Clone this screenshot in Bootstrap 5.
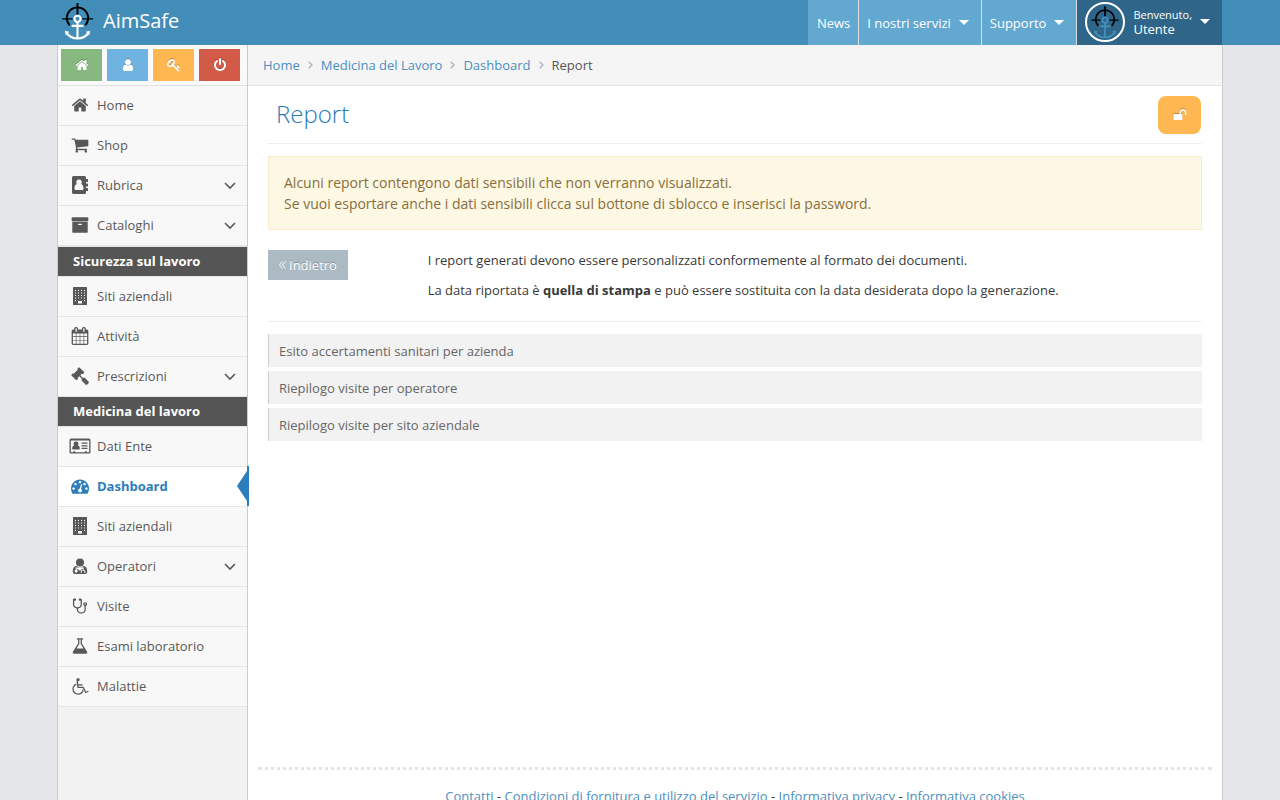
<!DOCTYPE html>
<html lang="it">
<head>
<meta charset="utf-8">
<meta name="viewport" content="width=device-width, initial-scale=1">
<title>Report - AimSafe</title>
<link rel="stylesheet" href="https://cdn.jsdelivr.net/npm/bootstrap@5.3.0/dist/css/bootstrap.min.css">
<style>
  body { font-family: "Open Sans", sans-serif; font-size: 13px; line-height: 20px; color: #393939; background: #e4e6e9; }
  a { text-decoration: none; color: #4c8fbd; }
  a:hover { text-decoration: underline; }
  svg { fill: currentColor; flex: none; }
  .shell { width: 100%; max-width: 1166px; margin: 0 auto; }

  /* top bar */
  .topbar { background: #438eb9; }
  .topbar .shell { min-height: 45px; padding: 0 1px; }
  .topbar a { color: #fff; }
  .topbar a:hover { text-decoration: none; }
  .brand-link { padding: 0 0 3px 3px; gap: 9px; }
  .brand-name { font-size: 20px; }
  .top-link { background: #62a8d1; padding: 0 8px; gap: 8px; border-left: 1px solid #ddd; }
  li:first-child > .top-link { border-left-color: #62a8d1; }
  .top-link.user-link { background: #2e6589; padding-bottom: 2px; }
  .user-link small { font-size: 11px; line-height: 15px; }
  .user-link .user-name { line-height: 15px; }
  .avatar { width: 40px; height: 40px; border: 2px solid #fff; border-radius: 50%; color: #438eb9; }
  .tri { width: 10px; height: 5px; }

  /* sidebar */
  .frame { min-height: 100vh; border: solid #ccc; border-width: 0 1px; background: #fff; }
  .sidebar { width: 190px; flex: none; background: #f2f2f2; border-right: 1px solid #ccc; }
  .shortcuts { height: 41px; padding: 0 3px; background: #fafafa; border-bottom: 1px solid #e0e0e0; gap: 5px; }
  .shortcuts .btn { width: 41px; height: 32px; padding: 0; border: 0; border-radius: 0; color: #fff; }
  .shortcuts svg, .lock-btn svg { width: 14px; height: 14px; filter: drop-shadow(0 -1px 0 rgba(0,0,0,.25)); }
  .bg-go { background: #87b87f !important; }
  .bg-me { background: #6fb3e0 !important; }
  .bg-key { background: #ffb752 !important; }
  .bg-off { background: #d15b47 !important; }
  .side-list:first-of-type { border-bottom: 1px solid #e5e5e5; }
  .side-title { height: 30px; padding: 0 15px; line-height: 29px; font-size: 13px; font-weight: 700; color: #fff; background: #555; border-bottom: 1px solid #e5e5e5; }
  .side-link { height: 40px; padding: 0 11px 2px 7px; color: #585858; background: #f8f8f8; border-bottom: 1px solid #e5e5e5; }
  .side-link .ico { width: 32px; padding-right: 2px; display: flex; justify-content: center; }
  .side-link .ico svg { width: 18px; height: 18px; }
  .side-link .ico svg.wide { width: 22px; }
  .side-link .arr { width: 12px; height: 12px; margin-left: auto; }
  .side-link.active { position: relative; background: #fff; color: #2b7dbc; font-weight: 700; }
  .side-link.active::before { content: ""; position: absolute; right: 0; top: 4px; border: solid transparent; border-width: 15px 10px 15px 0; border-right-color: #2b7dbc; }
  .side-link.active::after { content: ""; position: absolute; right: -2px; top: -1px; bottom: 0; width: 2px; background: #2b7dbc; }

  /* content */
  .crumbs { min-height: 41px; padding: 0 15px; background: #f5f5f5; border-bottom: 1px solid #e5e5e5; }
  .crumbs .breadcrumb { --bs-breadcrumb-item-padding-x: 0; gap: 8px; }
  .crumbs .breadcrumb-item { display: flex; align-items: center; gap: 8px; }
  .crumbs .breadcrumb-item::before { display: none; }
  .crumbs .active { color: #555; }
  .crumbs svg { width: 5px; height: 8px; color: #b2b6bf; }
  .page-body { padding: 10px 20px 24px; }
  .page-head { padding: 0 1px 9px 8px; margin-bottom: 12px; border-bottom: 1px dotted #e2e2e2; }
  .page-head h1 { padding-bottom: 2px; font-size: 24px; line-height: 30px; font-weight: 300; color: #2679b5; }
  .lock-btn { width: 43px; height: 38px; padding: 0; border: 0; border-radius: 8px; color: #fff; }
  .notice { padding: 15px; margin-bottom: 20px; font-size: 14px; line-height: 21px; color: #8a6d3b; background: #fcf8e3; border: 1px solid #faebcc; border-radius: 0; }
  .back-btn { height: 30px; padding: 0 11px; border: 0; border-radius: 0; font-size: 13px; line-height: 30px; color: #fff; background: #abbac3; text-shadow: 0 -1px 0 rgba(0,0,0,.25); gap: 3px; }
  .back-btn svg { width: 7px; height: 8px; }
  .info p { margin: 0 0 10px; }
  .dots { margin: 11px 0 12px; border: 0; border-top: 1px dotted #e2e2e2; opacity: 1; }
  .reports { gap: 4px; }
  .reports a { display: block; padding: 7px 10px 6px; color: #666; background: #f2f2f2; border-left: 1px solid #ccc; }
  .foot { margin: auto 10px 0; height: 78px; padding-top: 16px; border-top: 3px dotted #e5e5e5; }
</style>
</head>
<body>
<svg class="d-none" aria-hidden="true">
  <symbol id="i-home" viewBox="0 0 1792 1792"><path d="M1472 992v480q0 26-19 45t-45 19h-384v-384h-256v384h-384q-26 0-45-19t-19-45v-480q0-1 .5-3t.5-3l575-474 575 474q1 2 1 6zm223-69l-62 74q-8 9-21 11h-3q-13 0-21-7l-692-577-692 577q-12 8-24 7-13-2-21-11l-62-74q-8-10-7-23.5t11-21.5l719-599q32-26 76-26t76 26l244 204v-195q0-14 9-23t23-9h192q14 0 23 9t9 23v408l219 182q10 8 11 21.5t-7 23.5z"/></symbol>
  <symbol id="i-user" viewBox="0 0 1792 1792"><path d="M1536 1399q0 109-62.5 187t-150.5 78h-854q-88 0-150.5-78t-62.5-187q0-85 8.500-160.500t31.500-152 58.500-131 94-89 134.500-34.500q131 128 313 128t313-128q76 0 134.500 34.500t94 89 58.500 131 31.500 152 8.500 160.500zm-256-887q0 159-112.500 271.500t-271.500 112.500-271.500-112.500-112.500-271.500 112.500-271.500 271.500-112.500 271.500 112.500 112.500 271.500z"/></symbol>
  <symbol id="i-key" viewBox="0 0 1792 1792"><path d="M832 512q0-80-56-136t-136-56-136 56-56 136q0 42 19 83-41-19-83-19-80 0-136 56t-56 136 56 136 136 56 136-56 56-136q0-42-19-83 41 19 83 19 80 0 136-56t56-136zm851 704q0 17-49 66t-66 49q-9 0-28.500-16t-36.500-33-38.500-40-24.500-26l-96 96 220 220q28 28 28 68 0 42-39 81t-81 39q-40 0-68-28l-671-671q-176 131-365 131-163 0-265.500-102.500t-102.500-265.500q0-160 95-313t248-248 313-95q163 0 265.500 102.500t102.500 265.500q0 189-131 365l355 355 96-96q-3-3-26-24.500t-40-38.500-33-36.500-16-28.500q0-17 49-66t66-49q13 0 23 10 6 6 46 44.500t82 79.500 86.500 86 73 78 28.500 41z"/></symbol>
  <symbol id="i-off" viewBox="0 0 1792 1792"><path d="M1664 896q0 156-61 298t-164 245-245 164-298 61-298-61-245-164-164-245-61-298q0-182 80.500-343t226.500-270q43-32 95.500-25t83.500 50q32 42 24.500 94.500t-49.500 84.500q-98 74-151.500 181t-53.500 228q0 104 40.500 198.500t109.500 163.500 163.500 109.500 198.500 40.500 198.500-40.500 163.500-109.500 109.500-163.500 40.500-198.500q0-121-53.500-228t-151.500-181q-42-32-49.500-84.500t24.500-94.500q31-43 84-50t95 25q146 109 226.500 270t80.500 343zm-640-768v640q0 52-38 90t-90 38-90-38-38-90v-640q0-52 38-90t90-38 90 38 38 90z"/></symbol>
  <symbol id="i-cart" viewBox="0 0 1792 1792"><path d="M704 1536q0 52-38 90t-90 38-90-38-38-90 38-90 90-38 90 38 38 90zm896 0q0 52-38 90t-90 38-90-38-38-90 38-90 90-38 90 38 38 90zm128-1088v512q0 24-16.500 42.500t-40.500 21.500l-1044 122q13 60 13 70 0 16-24 64h920q26 0 45 19t19 45-19 45-45 19h-1024q-26 0-45-19t-19-45q0-11 8-31.500t16-36 21.500-40 15.500-29.500l-177-823h-204q-26 0-45-19t-19-45 19-45 45-19h256q16 0 28.500 6.500t19.500 15.500 13 24.500 8 26 5.500 29.500 4.500 26h1201q26 0 45 19t19 45z"/></symbol>
  <symbol id="i-book" viewBox="0 0 18 18"><path fill-rule="evenodd" d="M2.500 0h11q1.500 0 1.500 1.500V3h1.500q.5 0 .5.500v2q0 .5-.5.500H15v1.500h1.500q.5 0 .5.500v2q0 .5-.5.500H15V12h1.500q.5 0 .5.500v2q0 .5-.5.500H15v1.500q0 1.500-1.500 1.500h-11Q1 18 1 16.500v-15Q1 0 2.500 0zM8 3.500a2.700 2.700 0 0 0-2.200 4.400C4 8.400 3.500 10.500 3.500 12.500q0 1.500 1.300 1.500h6.400q1.300 0 1.300-1.500c0-2-.5-4.100-2.300-4.600A2.700 2.700 0 0 0 8 3.500z"/></symbol>
  <symbol id="i-box" viewBox="0 0 1792 1792"><path d="M1088 832q0-26-19-45t-45-19h-256q-26 0-45 19t-19 45 19 45 45 19h256q26 0 45-19t19-45zm576-192v960q0 26-19 45t-45 19h-1408q-26 0-45-19t-19-45v-960q0-26 19-45t45-19h1408q26 0 45 19t19 45zm64-448v256q0 26-19 45t-45 19h-1536q-26 0-45-19t-19-45v-256q0-26 19-45t45-19h1536q26 0 45 19t19 45z"/></symbol>
  <symbol id="i-building" viewBox="0 0 18 18"><path fill-rule="evenodd" d="M2.500 0h13q.5 0 .5.500v17q0 .5-.5.500h-13q-.5 0-.5-.500v-17q0-.5.500-.500zM4 3h1v1H4zm3 0h1v1H7zm3 0h1v1h-1zm3 0h1v1h-1zM4 5.500h1v1H4zm3 0h1v1H7zm3 0h1v1h-1zm3 0h1v1h-1zM4 8h1v1H4zm3 0h1v1H7zm3 0h1v1h-1zm3 0h1v1h-1zM4 10.500h1v1H4zm3 0h1v1H7zm3 0h1v1h-1zm3 0h1v1h-1zM4 13h1v1H4zm9 0h1v1h-1zm-6 1h4v2.500H7z"/></symbol>
  <symbol id="i-cal" viewBox="0 0 1792 1792"><path d="M192 1664h288v-288h-288v288zm352 0h320v-288h-320v288zm-352-352h288v-320h-288v320zm352 0h320v-320h-320v320zm-352-384h288v-288h-288v288zm736 736h320v-288h-320v288zm-384-736h320v-288h-320v288zm768 736h288v-288h-288v288zm-384-352h320v-320h-320v320zm-352-864v-288q0-13-9.500-22.500t-22.500-9.500h-64q-13 0-22.500 9.500t-9.500 22.500v288q0 13 9.500 22.500t22.500 9.500h64q13 0 22.500-9.500t9.500-22.500zm736 864h288v-320h-288v320zm-384-384h320v-288h-320v288zm384 0h288v-288h-288v288zm32-480v-288q0-13-9.500-22.500t-22.500-9.500h-64q-13 0-22.500 9.500t-9.500 22.500v288q0 13 9.500 22.500t22.500 9.500h64q13 0 22.500-9.500t9.500-22.500zm384-64v1280q0 52-38 90t-90 38h-1408q-52 0-90-38t-38-90v-1280q0-52 38-90t90-38h128v-96q0-66 47-113t113-47h64q66 0 113 47t47 113v96h384v-96q0-66 47-113t113-47h64q66 0 113 47t47 113v96h128q52 0 90 38t38 90z"/></symbol>
  <symbol id="i-gavel" viewBox="0 0 1792 1792"><path d="M1771 1536q0 53-37 90l-107 108q-39 37-91 37-53 0-90-37l-363-364q-38-36-38-90 0-53 43-96l-256-256-126 126q-14 14-34 14t-34-14q2 2 12.500 12t12.500 13 10 11.500 10 13.500 6 13.500 5.500 16.500 1.500 18q0 38-28 68-3 3-16.500 18t-19 20.500-18.500 16.500-22 15.500-22 9-26 4.500q-40 0-68-28l-408-408q-28-28-28-68 0-13 4.500-26t9-22 15.500-22 16.500-18.500 20.500-19 18-16.500q30-28 68-28 10 0 18 1.500t16.500 5.500 13.500 6 13.500 10 11.500 10 13 12.500 12 12.500q-14-14-14-34t14-34l348-348q14-14 34-14t34 14q-2-2-12.500-12t-12.500-13-10-11.500-10-13.500-6-13.500-5.500-16.500-1.500-18q0-38 28-68 3-3 16.500-18t19-20.500 18.500-16.500 22-15.500 22-9 26-4.500q40 0 68 28l408 408q28 28 28 68 0 13-4.500 26t-9 22-15.500 22-16.500 18.500-20.500 19-18 16.500q-30 28-68 28-10 0-18-1.500t-16.500-5.500-13.500-6-13.500-10-11.500-10-13-12.500-12-12.500q14 14 14 34t-14 34l-126 126 256 256q43-43 96-43 52 0 91 37l363 363q37 39 37 91z"/></symbol>
  <symbol id="i-card" viewBox="0 0 22 18"><path fill-rule="evenodd" d="M2 1.500h18q1.500 0 1.500 1.500v12q0 1.500-1.500 1.500H2Q.5 16.500.5 15V3Q.5 1.500 2 1.500zM1.800 3.500v11.300q0 .4.400.4h2v-1h2v1h9.600v-1h2v1h2q.4 0 .4-.4V3.500z"/><path d="M7 4.500a2.300 2.300 0 0 1 1.800 3.900c1.600.4 2 1.700 2 3.200q0 1-1 1H4.200q-1 0-1-1c0-1.500.4-2.800 2-3.200A2.300 2.300 0 0 1 7 4.500zM12.500 5.500h6v1.200h-6zm0 2.700h6v1.200h-6zm0 2.600h6V12h-6z"/></symbol>
  <symbol id="i-dash" viewBox="0 0 1792 1792"><path d="M384 1152q0-53-37.500-90.500t-90.500-37.500-90.500 37.500-37.500 90.500 37.500 90.500 90.500 37.500 90.500-37.500 37.500-90.500zm192-448q0-53-37.500-90.500t-90.500-37.500-90.500 37.500-37.500 90.500 37.500 90.500 90.500 37.500 90.500-37.500 37.500-90.500zm428 481l101-382q6-26-7.500-48.500t-38.500-29.500-48 6.500-30 39.500l-101 382q-60 5-107 43.500t-63 98.500q-20 77 20 146t117 89 146-20 89-117q16-60-6-117t-72-91zm660-33q0-53-37.500-90.500t-90.500-37.500-90.500 37.500-37.500 90.500 37.500 90.500 90.500 37.500 90.500-37.500 37.500-90.500zm-640-640q0-53-37.500-90.500t-90.500-37.500-90.500 37.500-37.500 90.500 37.500 90.500 90.500 37.500 90.500-37.500 37.500-90.500zm448 192q0-53-37.500-90.500t-90.500-37.500-90.500 37.500-37.500 90.500 37.500 90.500 90.500 37.500 90.500-37.500 37.500-90.500zm320 448q0 261-141 483-19 29-54 29h-1402q-35 0-54-29-141-221-141-483 0-182 71-348t191-286 286-191 348-71 348 71 286 191 191 286 71 348z"/></symbol>
  <symbol id="i-doc" viewBox="0 0 18 18"><circle cx="9" cy="5.500" r="4"/><path fill-rule="evenodd" d="M5.500 9q3.500 2.500 7 0c3 .4 3.700 3 3.700 5.500 0 1.700-1 2.500-2.200 2.500H4c-1.200 0-2.200-.8-2.200-2.500C1.800 12 2.500 9.400 5.500 9zm-.8 1.400v2.200a1.500 1.500 0 1 0 1 0V11.500L9 13.800l2.700-2.300v1.200c-1.200.2-1.900 1-1.900 2v1.200h.9v-1.200c0-1.500 2.700-1.500 2.700 0v1.200h.9v-1.200c0-1-.6-1.800-1.700-2v-2.400z"/></symbol>
  <symbol id="i-steth" viewBox="0 0 1792 1792"><path d="M1472 704q0-26-19-45t-45-19-45 19-19 45 19 45 45 19 45-19 19-45zm128 0q0 62-35.500 111t-92.500 70v395q0 159-131.500 271.500t-316.500 112.500-316.500-112.500-131.500-271.500v-132q-164-20-274-128t-110-252v-512q0-26 19-45t45-19q6 0 16 2 17-30 47-48t65-18q53 0 90.500 37.500t37.500 90.500-37.500 90.500-90.500 37.500q-33 0-64-18v402q0 106 94 181t226 75 226-75 94-181v-402q-31 18-64 18-53 0-90.500-37.500t-37.500-90.500 37.500-90.500 90.500-37.500q35 0 65 18t47 48q10-2 16-2 26 0 45 19t19 45v512q0 144-110 252t-274 128v132q0 106 94 181t226 75 226-75 94-181v-395q-57-21-92.500-70t-35.500-111q0-80 56-136t136-56 136 56 56 136z"/></symbol>
  <symbol id="i-flask" viewBox="0 0 1792 1792"><path d="M1591 1448q56 89 21.500 152.500t-140.500 63.500h-1152q-106 0-140.500-63.500t21.500-152.500l503-793v-399h-64q-26 0-45-19t-19-45 19-45 45-19h512q26 0 45 19t19 45-19 45-45 19h-64v399zm-779-725l-272 429h712l-272-429-20-31v-436h-128v436z"/></symbol>
  <symbol id="i-wheel" viewBox="0 0 1792 1792"><path d="M1163 1165l102 204q-58 179-210 290t-339 111q-156 0-288.500-77.500t-210-210-77.500-288.500q0-181 104.500-330t274.500-211l17 131q-122 54-195 165.500t-73 244.500q0 185 131.500 316.500t316.500 131.500q126 0 232.500-65t165-175.500 49.500-236.500zm534 198l58 114-256 128q-13 7-29 7-40 0-57-35l-239-477h-472q-24 0-42.500-16.500t-21.500-40.500l-96-779q-2-17 6-42 14-51 57-82.500t97-31.500q66 0 113 47t47 113q0 69-52 117.500t-120 41.500l37 289h423v128h-407l16 128h455q40 0 57 35l228 455z"/></symbol>
  <symbol id="i-unlock" viewBox="0 0 1792 1792"><path d="M1728 576v256q0 26-19 45t-45 19h-64q-26 0-45-19t-19-45v-256q0-106-75-181t-181-75-181 75-75 181v192h96q40 0 68 28t28 68v576q0 40-28 68t-68 28h-960q-40 0-68-28t-28-68v-576q0-40 28-68t68-28h672v-192q0-185 131.500-316.500t316.500-131.500 316.500 131.500 131.500 316.500z"/></symbol>
  <symbol id="i-down" viewBox="0 0 12 12"><path d="M1 4 6 9 11 4" fill="none" stroke="currentColor" stroke-width="1.600"/></symbol>
  <symbol id="i-right" viewBox="0 0 5 8"><path d="M.7.700 4 4 .7 7.300" fill="none" stroke="currentColor" stroke-width="1.500"/></symbol>
  <symbol id="i-tri" viewBox="0 0 10 5"><path d="M0 0h10L5 5z"/></symbol>
  <symbol id="i-anchor" viewBox="0 0 34 40">
    <g fill="none" stroke="#000" stroke-width="2"><path d="M9 24.500A11 11 0 1 1 25 24.500M17 1.500v12"/><path d="M1 17.800h11M22 17.800h11" stroke-width="1.400"/></g>
    <g fill="none" stroke="currentColor" stroke-width="2.200"><circle cx="17" cy="17.800" r="3.200"/><path d="M17 21v17M11 25h12M5.500 32q4 6 11.500 6t11.500-6"/></g>
    <path d="M4 30l4.500 1L5 35zM30 30l-4.500 1 3.500 4z"/>
  </symbol>
</svg>

<header class="topbar">
  <div class="shell d-flex align-items-stretch justify-content-between">
    <a href="#" class="brand-link d-flex align-items-center">
      <svg width="33" height="40"><use href="#i-anchor"/></svg>
      <span class="brand-name">AimSafe</span>
    </a>
    <ul class="list-unstyled d-flex align-items-stretch mb-0">
      <li class="d-flex"><a href="#" class="top-link d-flex align-items-center">News</a></li>
      <li class="d-flex"><a href="#" class="top-link d-flex align-items-center">I nostri servizi<svg class="tri me-1"><use href="#i-tri"/></svg></a></li>
      <li class="d-flex"><a href="#" class="top-link d-flex align-items-center">Supporto<svg class="tri me-1"><use href="#i-tri"/></svg></a></li>
      <li class="d-flex"><a href="#" class="top-link user-link d-flex align-items-center">
        <span class="avatar d-flex align-items-center justify-content-center"><svg width="30" height="34"><use href="#i-anchor"/></svg></span>
        <span class="d-flex flex-column"><small>Benvenuto,</small><span class="user-name">Utente</span></span>
        <svg class="tri me-1"><use href="#i-tri"/></svg></a></li>
    </ul>
  </div>
</header>

<div class="shell frame d-flex align-items-stretch">
  <aside class="sidebar">
    <div class="shortcuts d-flex align-items-center">
      <button type="button" class="btn bg-go d-flex align-items-center justify-content-center" aria-label="Home"><svg><use href="#i-home"/></svg></button>
      <button type="button" class="btn bg-me d-flex align-items-center justify-content-center" aria-label="Profilo"><svg><use href="#i-user"/></svg></button>
      <button type="button" class="btn bg-key d-flex align-items-center justify-content-center" aria-label="Password"><svg><use href="#i-key"/></svg></button>
      <button type="button" class="btn bg-off d-flex align-items-center justify-content-center" aria-label="Esci"><svg><use href="#i-off"/></svg></button>
    </div>
    <nav>
      <ul class="side-list list-unstyled mb-0">
        <li><a href="#" class="side-link d-flex align-items-center"><span class="ico"><svg><use href="#i-home"/></svg></span>Home</a></li>
        <li><a href="#" class="side-link d-flex align-items-center"><span class="ico"><svg><use href="#i-cart"/></svg></span>Shop</a></li>
        <li><a href="#" class="side-link d-flex align-items-center"><span class="ico"><svg><use href="#i-book"/></svg></span>Rubrica<svg class="arr"><use href="#i-down"/></svg></a></li>
        <li><a href="#" class="side-link d-flex align-items-center"><span class="ico"><svg><use href="#i-box"/></svg></span>Cataloghi<svg class="arr"><use href="#i-down"/></svg></a></li>
      </ul>
      <h2 class="side-title mb-0">Sicurezza sul lavoro</h2>
      <ul class="list-unstyled mb-0">
        <li><a href="#" class="side-link d-flex align-items-center"><span class="ico"><svg><use href="#i-building"/></svg></span>Siti aziendali</a></li>
        <li><a href="#" class="side-link d-flex align-items-center"><span class="ico"><svg><use href="#i-cal"/></svg></span>Attività</a></li>
        <li><a href="#" class="side-link d-flex align-items-center"><span class="ico"><svg><use href="#i-gavel"/></svg></span>Prescrizioni<svg class="arr"><use href="#i-down"/></svg></a></li>
      </ul>
      <h2 class="side-title mb-0">Medicina del lavoro</h2>
      <ul class="list-unstyled mb-0">
        <li><a href="#" class="side-link d-flex align-items-center"><span class="ico"><svg class="wide"><use href="#i-card"/></svg></span>Dati Ente</a></li>
        <li><a href="#" class="side-link active d-flex align-items-center"><span class="ico"><svg><use href="#i-dash"/></svg></span>Dashboard</a></li>
        <li><a href="#" class="side-link d-flex align-items-center"><span class="ico"><svg><use href="#i-building"/></svg></span>Siti aziendali</a></li>
        <li><a href="#" class="side-link d-flex align-items-center"><span class="ico"><svg><use href="#i-doc"/></svg></span>Operatori<svg class="arr"><use href="#i-down"/></svg></a></li>
        <li><a href="#" class="side-link d-flex align-items-center"><span class="ico"><svg><use href="#i-steth"/></svg></span>Visite</a></li>
        <li><a href="#" class="side-link d-flex align-items-center"><span class="ico"><svg><use href="#i-flask"/></svg></span>Esami laboratorio</a></li>
        <li><a href="#" class="side-link d-flex align-items-center"><span class="ico"><svg><use href="#i-wheel"/></svg></span>Malattie</a></li>
      </ul>
    </nav>
  </aside>

  <div class="flex-grow-1 d-flex flex-column">
    <nav class="crumbs d-flex align-items-center" aria-label="breadcrumb">
      <ol class="breadcrumb mb-0">
        <li class="breadcrumb-item"><a href="#">Home</a><svg><use href="#i-right"/></svg></li>
        <li class="breadcrumb-item"><a href="#">Medicina del Lavoro</a><svg><use href="#i-right"/></svg></li>
        <li class="breadcrumb-item"><a href="#">Dashboard</a><svg><use href="#i-right"/></svg></li>
        <li class="breadcrumb-item active" aria-current="page">Report</li>
      </ol>
    </nav>
    <main class="page-body">
      <div class="page-head d-flex align-items-center justify-content-between">
        <h1 class="mb-0">Report</h1>
        <button type="button" class="btn lock-btn bg-key d-flex align-items-center justify-content-center" aria-label="Sblocca"><svg><use href="#i-unlock"/></svg></button>
      </div>
      <div class="alert notice" role="alert">Alcuni report contengono dati sensibili che non verranno visualizzati.<br>Se vuoi esportare anche i dati sensibili clicca sul bottone di sblocco e inserisci la password.</div>
      <div class="row gx-4">
        <div class="col-2"><button type="button" class="btn back-btn d-inline-flex align-items-center"><svg viewBox="0 0 7 8"><path d="M3.500.5 .5 4l3 3.500M6.500.5l-3 3.500 3 3.500" fill="none" stroke="currentColor"/></svg>Indietro</button></div>
        <div class="col-10 info">
          <p>I report generati devono essere personalizzati conformemente al formato dei documenti.</p>
          <p>La data riportata è <b>quella di stampa</b> e può essere sostituita con la data desiderata dopo la generazione.</p>
        </div>
      </div>
      <hr class="dots">
      <ul class="reports list-unstyled d-flex flex-column mb-0">
        <li><a href="#">Esito accertamenti sanitari per azienda</a></li>
        <li><a href="#">Riepilogo visite per operatore</a></li>
        <li><a href="#">Riepilogo visite per sito aziendale</a></li>
      </ul>
    </main>
    <footer class="foot text-center"><a href="#">Contatti</a> - <a href="#">Condizioni di fornitura e utilizzo del servizio</a> - <a href="#">Informativa privacy</a> - <a href="#">Informativa cookies</a></footer>
  </div>
</div>
<script src="https://cdn.jsdelivr.net/npm/bootstrap@5.3.0/dist/js/bootstrap.bundle.min.js"></script>
</body>
</html>
